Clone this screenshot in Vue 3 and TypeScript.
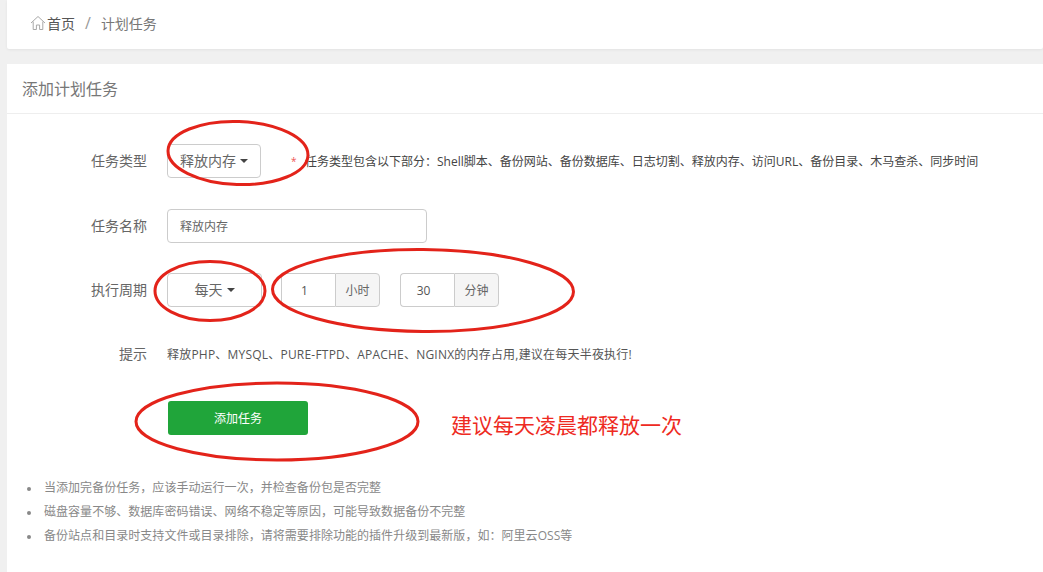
<script setup lang="ts">
const tips: string[] = [
  '当添加完备份任务，应该手动运行一次，并检查备份包是否完整',
  '磁盘容量不够、数据库密码错误、网络不稳定等原因，可能导致数据备份不完整',
  '备份站点和目录时支持文件或目录排除，请将需要排除功能的插件升级到最新版，如：阿里云OSS等',
]
</script>

<template>
  <div class="page">
    <header class="crumbs">
      <svg class="home" viewBox="0 0 16 16" width="16" height="16" fill="none" stroke="#a8a8a8" stroke-width="1">
        <path d="M1 8 L8 1.500 L15 8" />
        <path d="M3.200 6.600 V14.500 H6.400 V10 H9.600 V14.500 H12.800 V6.600" />
      </svg>
      <span class="crumb-home">首页</span>
      <span class="crumb-sep">/</span>
      <span class="crumb-cur">计划任务</span>
    </header>

    <main class="card">
      <h2 class="card-title">添加计划任务</h2>
      <div class="form">
        <div class="row">
          <label class="label">任务类型</label>
          <button class="select select-type">释放内存<i class="caret"></i></button>
          <span class="star">*</span>
          <span class="hint">任务类型包含以下部分：Shell脚本、备份网站、备份数据库、日志切割、释放内存、访问URL、备份目录、木马查杀、同步时间</span>
        </div>
        <div class="row">
          <label class="label">任务名称</label>
          <div class="input name">释放内存</div>
        </div>
        <div class="row">
          <label class="label">执行周期</label>
          <button class="select select-cycle">每天<i class="caret"></i></button>
          <div class="group first">
            <div class="input num">1</div><div class="addon">小时</div>
          </div>
          <div class="group second">
            <div class="input num">30</div><div class="addon">分钟</div>
          </div>
        </div>
        <div class="row">
          <label class="label">提示</label>
          <span class="tip-text">释放PHP、MYSQL、PURE-FTPD、APACHE、NGINX的内存占用,建议在每天半夜执行!</span>
        </div>
        <div class="row">
          <span class="label"></span>
          <button class="submit">添加任务</button>
        </div>
      </div>
      <ul class="tips">
        <li v-for="t in tips" :key="t">{{ t }}</li>
      </ul>
    </main>

    <svg class="marks" viewBox="0 0 1043 572" width="1043" height="572" fill="none" stroke="#e3231a" stroke-width="3">
      <ellipse cx="238" cy="153" rx="70" ry="31.500" transform="rotate(2 238 153)" />
      <ellipse cx="210" cy="291" rx="55" ry="29.500" />
      <ellipse cx="423" cy="290.500" rx="150.500" ry="41" transform="rotate(0.500 423 290)" />
      <ellipse cx="277" cy="421.500" rx="141" ry="38.500" />
    </svg>
    <div class="note">建议每天凌晨都释放一次</div>
  </div>
</template>

<style>
html, body { margin: 0; background: #f0f0f0; }
</style>

<style scoped>
.page {
  position: relative;
  width: 1043px;
  height: 572px;
  overflow: hidden;
  box-sizing: border-box;
  padding-left: 7px;
  background: #f0f0f0;
  font-family: "Open Sans", "Noto Sans CJK SC", sans-serif;
  color: #555;
  font-size: 12px;
}
.crumbs {
  box-sizing: border-box;
  height: 49px;
  background: #fff;
  box-shadow: 0 1px 3px rgba(0, 0, 0, 0.06);
  border-radius: 0 0 2px 2px;
  display: flex;
  align-items: center;
  padding: 0 0 4px 23px;
  font-size: 14px;
  margin-bottom: 15px;
}
.home { margin-right: 1px; }
.crumb-home { color: #555; }
.crumb-sep { color: #999; margin: 0 10px 0 10px; font-size: 16px; }
.crumb-cur { color: #777; font-size: 14px; }
.card {
  background: #fff;
  height: 508px;
}
.card-title {
  margin: 0;
  box-sizing: border-box;
  height: 50px;
  line-height: 50px;
  padding-left: 15px;
  font-size: 16px;
  font-weight: 400;
  color: #777;
  border-bottom: 1px solid #eee;
}
.form {
  padding-top: 30px;
  display: flex;
  flex-direction: column;
  gap: 30px;
}
.row {
  display: flex;
  align-items: center;
  height: 34px;
}
.row:first-child { margin-bottom: 1px; }
.label {
  width: 140px;
  margin-right: 20px;
  padding-bottom: 2px;
  text-align: right;
  font-size: 14px;
  color: #666;
}
.select {
  box-sizing: border-box;
  height: 34px;
  border: 1px solid #ccc;
  border-radius: 4px;
  background: #fff;
  color: #666;
  font: inherit;
  font-size: 14px;
  padding: 0 0 2px;
  display: flex;
  align-items: center;
  justify-content: center;
}
.select-type { width: 94px; }
.select-cycle { width: 95px; }
.caret {
  display: inline-block;
  width: 0;
  height: 0;
  margin: 2px 0 0 4px;
  border-top: 4px solid #444;
  border-left: 4px solid transparent;
  border-right: 4px solid transparent;
}
.star {
  color: #e55;
  font-size: 10px;
  margin-left: 30px;
  width: 14px;
}
.hint { color: #444; font-size: 12px; white-space: nowrap; }
.input {
  box-sizing: border-box;
  height: 34px;
  border: 1px solid #ccc;
  background: #fff;
  display: flex;
  align-items: center;
}
.name {
  width: 260px;
  border-radius: 4px;
  padding: 0 0 0 12px;
  font-size: 12px;
  color: #666;
}
.group { display: flex; }
.group.first { margin-left: 19px; }
.group.second { margin-left: 20px; }
.num {
  width: 54px;
  justify-content: center;
  border-right: 0;
  border-radius: 4px 0 0 4px;
  padding: 0 8px 0 0;
  font-size: 12px;
  color: #555;
}
.addon {
  box-sizing: border-box;
  height: 34px;
  width: 45px;
  border: 1px solid #ccc;
  border-radius: 0 4px 4px 0;
  background: #f5f5f5;
  display: flex;
  align-items: center;
  justify-content: center;
  color: #666;
}
.tip-text { color: #555; font-size: 12px; white-space: nowrap; letter-spacing: 0.210px; }
.submit {
  margin-left: 1px;
  width: 140px;
  height: 34px;
  border: 0;
  border-radius: 3px;
  background: #20a53a;
  color: #fff;
  font: inherit;
  font-size: 12px;
  padding: 0;
}
.tips {
  list-style: none;
  margin: 41px 0 0;
  padding: 0 0 0 37px;
  color: #888;
  font-size: 12px;
  letter-spacing: 0.040px;
}
.tips li {
  line-height: 24px;
  position: relative;
}
.tips li::before {
  content: "";
  position: absolute;
  left: -17px;
  top: 11px;
  width: 4px;
  height: 4px;
  border-radius: 50%;
  background: #888;
}
.marks {
  position: absolute;
  left: 0;
  top: 0;
  pointer-events: none;
}
.note {
  position: absolute;
  left: 451px;
  top: 409px;
  font-size: 21px;
  line-height: 32px;
  color: #ee2a22;
  white-space: nowrap;
}
</style>
